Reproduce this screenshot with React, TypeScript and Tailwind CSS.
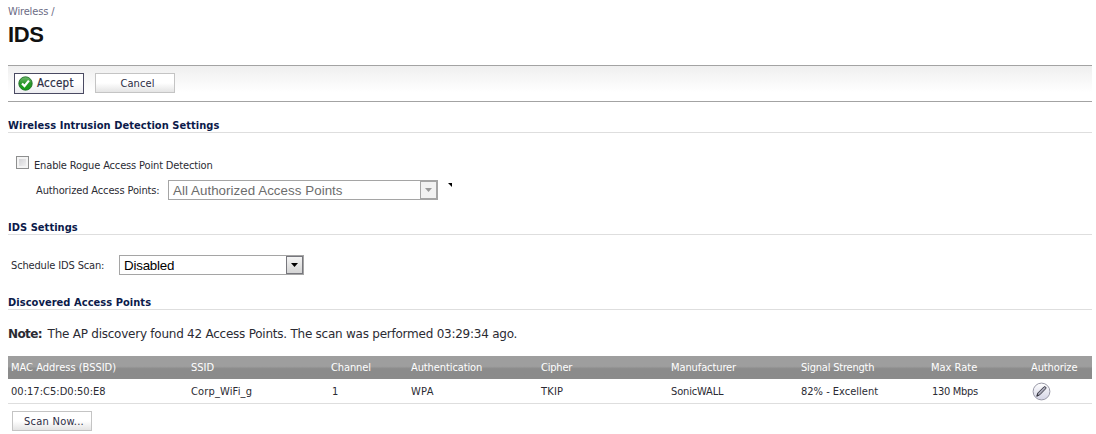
import type { ReactNode } from 'react'

type Column = {
  label: string
  value: string
  width: string
  labelClass: string
  valueClass: string
}

const columns: Column[] = [
  { label: 'MAC Address (BSSID)', value: '00:17:C5:D0:50:E8', width: 'w-[180px]', labelClass: '', valueClass: 'tracking-[0.03px]' },
  { label: 'SSID', value: 'Corp_WiFi_g', width: 'w-[140px]', labelClass: '', valueClass: 'tracking-[0.15px]' },
  { label: 'Channel', value: '1', width: 'w-[80px]', labelClass: 'tracking-[-0.1px]', valueClass: 'pl-px' },
  { label: 'Authentication', value: 'WPA', width: 'w-[130px]', labelClass: 'tracking-[-0.1px]', valueClass: 'tracking-[0.3px]' },
  { label: 'Cipher', value: 'TKIP', width: 'w-[130px]', labelClass: 'tracking-[-0.2px]', valueClass: 'tracking-[0.2px]' },
  { label: 'Manufacturer', value: 'SonicWALL', width: 'w-[130px]', labelClass: 'tracking-[-0.1px]', valueClass: 'tracking-[-0.15px]' },
  { label: 'Signal Strength', value: '82% - Excellent', width: 'w-[130px]', labelClass: 'tracking-[-0.2px]', valueClass: '' },
  { label: 'Max Rate', value: '130 Mbps', width: 'w-[100px]', labelClass: '', valueClass: 'pl-px tracking-[-0.3px]' },
]

function CheckIcon() {
  return (
    <svg width="15" height="15" viewBox="0 0 15 15">
      <defs>
        <linearGradient id="check-fill" x1="0" y1="0" x2="0" y2="1">
          <stop offset="0" stopColor="#6fbb6d" />
          <stop offset="0.5" stopColor="#2b962a" />
          <stop offset="1" stopColor="#12a012" />
        </linearGradient>
      </defs>
      <circle cx="7.5" cy="7.5" r="6.7" fill="url(#check-fill)" stroke="#23702a" strokeWidth="0.9" />
      <path d="M4 7.4L6.5 10L10.9 4.6" fill="none" stroke="#fff" strokeWidth="2.2" />
    </svg>
  )
}

function EditIcon() {
  return (
    <svg width="19" height="19" viewBox="0 0 19 19">
      <defs>
        <linearGradient id="edit-fill" x1="0" y1="0" x2="0" y2="1">
          <stop offset="0" stopColor="#ffffff" />
          <stop offset="1" stopColor="#d3d3e4" />
        </linearGradient>
      </defs>
      <circle cx="9.5" cy="9.5" r="8.4" fill="url(#edit-fill)" stroke="#9a9aa8" />
      <path d="M4.8 14.2L5.8 11L11.8 5Q12.8 4.2 13.6 5Q14.4 5.8 13.6 6.8L7.8 12.8Z" fill="#a9a9b8" stroke="#3c3c48" strokeWidth="1" />
      <path d="M4.6 14.4L5.4 12L7 13.5Z" fill="#33333c" />
    </svg>
  )
}

function SectionTitle({ children }: { children: ReactNode }) {
  return (
    <h2 className="h-[16px] border-b border-[#dedede] text-[11px] leading-[17px] font-bold tracking-[0.05px] text-[#0b1a4a]">
      {children}
    </h2>
  )
}

export default function App() {
  return (
    <div className="h-[434px] overflow-hidden bg-white pr-1 pl-2 font-['DejaVu_Sans_Condensed','DejaVu_Sans',sans-serif] text-[11px] whitespace-nowrap text-[#2b2b33] [font-stretch:condensed]">
      <div className="h-[21px] pt-[4px] leading-[15px] tracking-[-0.15px] text-[#6b6b85]">Wireless /</div>
      <h1 className="h-[44px] font-['Liberation_Sans',sans-serif] text-[22px] leading-[27px] font-bold tracking-[-0.4px] text-[#111]">IDS</h1>

      <div className="flex h-[37px] items-start border-y border-[#a3a3a3] bg-linear-to-b from-[#efefef] to-white to-75% pt-[7px] pl-[6px]">
        <button className="flex h-[21px] w-[70px] items-center border border-[#4a4a62] bg-linear-to-b from-white from-50% to-[#ececf0] pl-[3px] text-[#2d2d45]">
          <CheckIcon />
          <span className="ml-[4px] text-[11.5px] tracking-[0.25px] [-webkit-text-stroke:0.2px_#2d2d45]">Accept</span>
        </button>
        <button className="ml-[11px] h-[20px] w-[80px] border border-[#c4c4c4] bg-linear-to-b from-white from-50% to-[#e4e4e4] pl-[5px] leading-[19px] tracking-[0.1px] text-[#2d2d45]">
          Cancel
        </button>
      </div>

      <div className="pt-[15px]">
        <SectionTitle>Wireless Intrusion Detection Settings</SectionTitle>
      </div>
      <div className="flex h-[47px] items-start pt-[23px] pl-[8px]">
        <div className="h-[13px] w-[13px] border border-[#8e8f8f] bg-linear-to-br from-[#cbcbcf] to-[#f8f8f8] shadow-[inset_0_0_0_2px_#f4f4f4]" />
        <span className="mt-[2px] ml-[5px] leading-[15px] tracking-[-0.15px]">Enable Rogue Access Point Detection</span>
      </div>
      <div className="flex h-[39px] items-start pl-[28px]">
        <span className="mt-[3px] w-[132px] leading-[15px] tracking-[-0.13px]">Authorized Access Points:</span>
        <div className="flex h-[20px] w-[270px] border border-[#a5a5a5] font-['Liberation_Sans',sans-serif] text-[13.33px] leading-[20px] text-[#6d6d6d]">
          <span className="flex-1 pl-[4px] tracking-[0.05px]">All Authorized Access Points</span>
          <span className="flex w-[17px] items-center justify-center border border-[#a5a5a5] bg-[#f2f2f2]">
            <svg width="7" height="4" viewBox="0 0 7 4">
              <path d="M0 0H7L3.5 4Z" fill="#9a9a9a" />
            </svg>
          </span>
        </div>
        <svg className="mt-[3px] ml-[10px]" width="4" height="4" viewBox="0 0 4 4">
          <path d="M0 0H4V4Z" fill="#000" />
        </svg>
      </div>

      <SectionTitle>IDS Settings</SectionTitle>
      <div className="flex h-[59px] items-start pt-[20px] pl-[3px]">
        <span className="mt-[3px] w-[108px] leading-[15px] tracking-[-0.15px]">Schedule IDS Scan:</span>
        <div className="flex h-[20px] w-[185px] border border-[#a5a5a5] font-['Liberation_Sans',sans-serif] text-[13.33px] leading-[20px] text-black">
          <span className="flex-1 pl-[4px] tracking-[-0.2px]">Disabled</span>
          <span className="flex w-[17px] items-center justify-center border border-[#77777d] bg-linear-to-b from-[#f4f4f4] to-[#d4d4d4]">
            <svg width="7" height="4" viewBox="0 0 7 4">
              <path d="M0 0H7L3.5 4Z" fill="#000" />
            </svg>
          </span>
        </div>
      </div>

      <SectionTitle>Discovered Access Points</SectionTitle>
      <p className="h-[46px] pt-[16px] font-['DejaVu_Sans',sans-serif] text-[12px] leading-[17px] tracking-[-0.24px] [font-stretch:normal]">
        <b className="mr-[2px] tracking-[-0.6px]">Note:</b> The AP discovery found 42 Access Points. The scan was performed 03:29:34 ago.
      </p>

      <div className="flex h-[23px] items-center bg-linear-to-b from-[#9e9e9e] from-45% to-[#8b8b8b] to-55% pl-[3px] leading-[15px] text-white">
        {columns.map((column) => (
          <div key={column.label} className={column.width}>
            <span className={column.labelClass}>{column.label}</span>
          </div>
        ))}
        <div className="tracking-[-0.1px]">Authorize</div>
      </div>
      <div className="flex h-[25px] items-center border-b border-[#dedede] pl-[3px] leading-[15px]">
        {columns.map((column) => (
          <div key={column.label} className={column.width}>
            <span className={column.valueClass}>{column.value}</span>
          </div>
        ))}
        <div className="pl-px">
          <EditIcon />
        </div>
      </div>
      <button className="mt-[7px] ml-[4px] block h-[20px] w-[80px] border border-[#c4c4c4] bg-linear-to-b from-white from-50% to-[#e4e4e4] pl-[4px] leading-[19px] tracking-[0.25px] text-[#2d2d45]">
        Scan Now...
      </button>
    </div>
  )
}
